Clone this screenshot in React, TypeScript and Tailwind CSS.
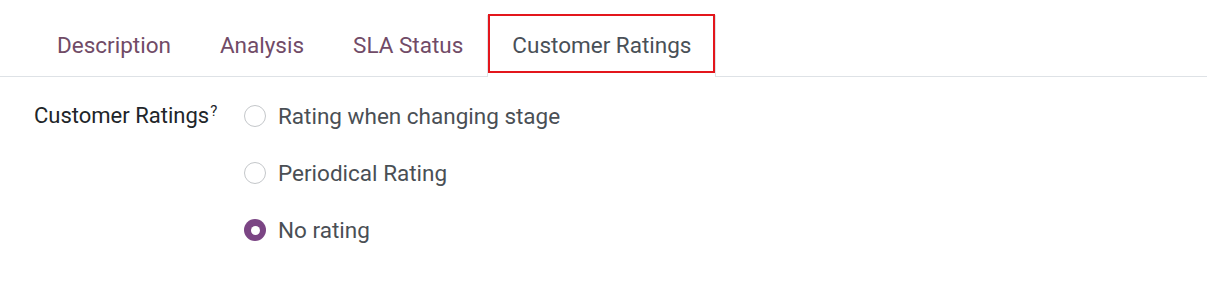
const font = { fontFamily: 'Roboto, "Noto Sans", sans-serif' }

const tabs = ['Description', 'Analysis', 'SLA Status', 'Customer Ratings']

const options = [
  { label: 'Rating when changing stage', checked: false },
  { label: 'Periodical Rating', checked: false },
  { label: 'No rating', checked: true },
]

function Radio({ checked }: { checked: boolean }) {
  return checked ? (
    <span className="flex h-[22px] w-[22px] shrink-0 items-center justify-center rounded-full bg-[#7b4584]">
      <span className="h-[9px] w-[9px] rounded-full bg-white" />
    </span>
  ) : (
    <span className="h-[22px] w-[22px] shrink-0 rounded-full border border-[#c4c7ca] bg-white" />
  )
}

export default function App() {
  return (
    <div className="h-[301px] w-[1207px] bg-white" style={font}>
      <div className="flex border-b border-[#dee2e6] pl-[32px] pt-[15px]">
        {tabs.map((t) => {
          const active = t === 'Customer Ratings'
          return active ? (
            <div
              key={t}
              className="relative -mb-px border border-b-0 border-[#dee2e6] bg-white px-[24px] pb-[15px] pt-[14px] text-[22.5px] leading-[30px] text-[#495057]"
            >
              {t}
              <span className="pointer-events-none absolute -top-[2px] bottom-[4px] left-0 right-0 border-[2px] border-[#e3161c]" />
            </div>
          ) : (
            <div
              key={t}
              className="border-y border-l border-transparent px-[24px] pb-[15px] pt-[14px] text-[22.5px] leading-[30px] text-[#714b67]"
            >
              {t}
            </div>
          )
        })}
      </div>
      <div className="flex pl-[34px] pt-[24px]">
        <div className="w-[210px] shrink-0 text-[22px] leading-[30px] text-[#212529]">
          Customer Ratings<sup className="ml-px text-[15px]">?</sup>
        </div>
        <div className="flex flex-col gap-[27px]">
          {options.map((o) => (
            <label key={o.label} className="flex items-center gap-[12px] text-[22.5px] leading-[30px] text-[#4a4f55]">
              <Radio checked={o.checked} />
              {o.label}
            </label>
          ))}
        </div>
      </div>
    </div>
  )
}
